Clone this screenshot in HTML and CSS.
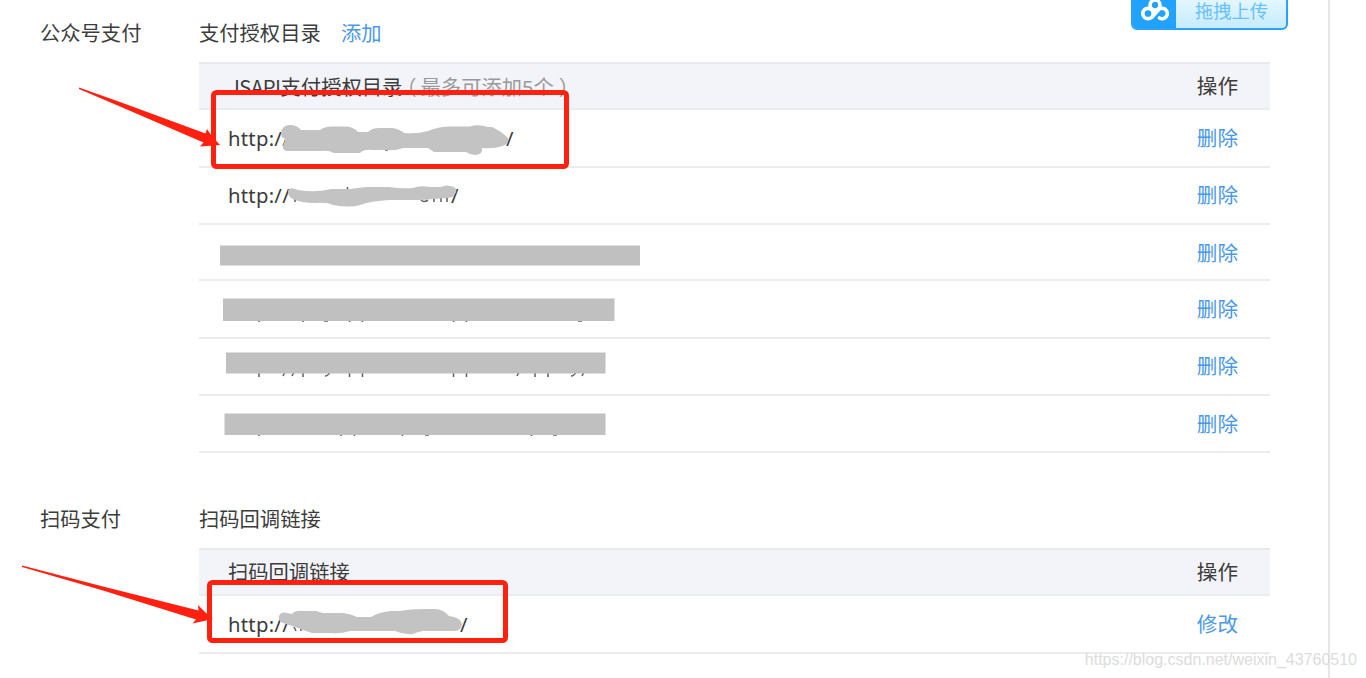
FILE: index.html
```
<!DOCTYPE html>
<html lang="zh-CN">
<head>
    <meta charset="UTF-8">
    <meta name="viewport" content="width=device-width, initial-scale=1.0">
    <title>支付授权目录</title>
    <link rel="stylesheet" href="styles.css">
</head>
<body>
    <div class="page">
        <div class="section">
            <div class="label">公众号支付</div>
            <div class="content">
                <div class="title">支付授权目录 <a class="add">添加</a></div>
                <div class="table">
                    <div class="row head">
                        <div><span class="jsapi">JSAPI</span>支付授权目录<span class="tip"><span class="paren">（</span>最多可添加5个<span class="paren-end">）</span></span></div>
                        <div class="action">操作</div>
                    </div>
                    <div class="row"><div class="url">http://<span class="end-1">/</span></div><a class="action">删除</a></div>
                    <div class="row short"><div class="url">http://<span class="end-2">/</span></div><a class="action">删除</a></div>
                    <div class="row low"><div class="url"></div><a class="action">删除</a></div>
                    <div class="row"><div class="url"></div><a class="action">删除</a></div>
                    <div class="row short"><div class="url"></div><a class="action">删除</a></div>
                    <div class="row last"><div class="url"></div><a class="action">删除</a></div>
                </div>
            </div>
        </div>
        <div class="section second">
            <div class="label">扫码支付</div>
            <div class="content">
                <div class="title">扫码回调链接</div>
                <div class="table">
                    <div class="row head">
                        <div>扫码回调链接</div>
                        <div class="action">操作</div>
                    </div>
                    <div class="row"><div class="url">http://<span class="end-3">/</span></div><a class="action">修改</a></div>
                </div>
            </div>
        </div>
    </div>

    <div class="upload">
        <div class="upload-icon">
            <svg width="32" height="24" viewBox="0 0 32 24" fill="none" stroke="#fff" stroke-width="3.7" stroke-linecap="round">
                <circle cx="16" cy="5" r="5"/>
                <circle cx="9" cy="13.500" r="5.200"/>
                <path d="M13 17L19 10.300A5.200 5.200 0 1 1 20.500 18"/>
            </svg>
        </div>
        <div class="upload-text">拖拽上传</div>
    </div>

    <!-- hidden addresses, boxes and arrows -->
    <svg class="marks" width="1366" height="678" viewBox="0 0 1366 678">
        <g class="ink">
            <path d="M259 319v3M303 319v3M324 321h4M349.500 319v3M362.500 319v3M453.500 319v3M466.500 319v3M578 321h4"/>
            <path d="M259 372v5M285 372l-2 4M294 372l-2 4M303 372v5M330 372q-2 4-5 4M349.500 372v5M362.500 372v5M453.500 372v5M466.500 372v5M519 372l-2 4M535 372v5M548 372v5M576 372q-2 4-5 4M584 372l-2 4"/>
            <path d="M259 433v3M341 433v3M354.500 433v3M402.500 433v3M425 435h4M531.500 433v3M553 435h4"/>
            <path d="M347.500 187v4M371 188v3M383 188v3M421 200q3 3 7 0M434 196v6M441 196v6M447 196v6M295 199v3"/>
            <path d="M385 150h3M433 150h2M294 627l2 4M301 629v2M369 629v2M374 629v2"/>
        </g>
        <g class="cover">
            <rect x="220" y="245.500" width="420" height="20"/>
            <rect x="223" y="298.500" width="391.500" height="22.500"/>
            <rect x="226" y="352.500" width="379.500" height="21"/>
            <rect x="224.500" y="413.500" width="381" height="21.500"/>
        </g>
        <g class="brush">
            <path d="M281 133Q282 125 290 125Q297 125 301 130H320Q325 126 333 126.500H348Q355 128 358 132H368Q372 128 379 128H393Q401 130 404 133Q418 134 428 131Q437 127 448 126.500H470Q478 124 488 127H492Q501 131 508 138Q509 142 505 145Q495 149 482 148Q483 155 475 155Q470 155 466 152H434L428 148H403L396 150H372Q364 149 360 153H334Q328 150 322 151H286Q281 149 284 143Q286 140 284 138Q281 138 281 133Z"/>
            <path d="M288 191Q289 186 298 190Q315 193 331 189H350L366 187H389Q402 189 413 188Q420 185 430 187H441Q446 184 454 187Q458 190 455 194Q453 198 447 198Q434 199 421 200H390Q370 201 360 205Q350 208 333 205Q327 202 315 203Q301 203 293 199Q288 197 288 191Z"/>
            <path d="M279 616Q281 611 287 613L292 614Q295 610 303 611H316L323 613H343Q351 614 357 617H371Q379 612 391 611H400Q409 609 425 609H436Q444 610 449 616Q460 617 462 624Q461 631 455 631H423Q417 632 413 634Q404 635 395 631H350Q341 634 330 633H312Q302 630 298 628L286 624Q277 622 279 616Z"/>
        </g>
        <g class="box">
            <rect x="213.500" y="92.500" width="353" height="74" rx="3"/>
            <rect x="209.500" y="582.500" width="296" height="58" rx="3"/>
        </g>
        <g class="arrow">
            <path d="M79 87.500L120 102L205.500 133.500L207 129L211 135L220 145L200 146.500L203.500 142.500L120 106.500L79 89Z"/>
            <path d="M22 565.500L103 586.500L198.500 610.500L198 605L205 612L213 619L192.500 623.500L196 619.500L103 590.500L22 567Z"/>
        </g>
    </svg>
    <div class="watermark">https://blog.csdn.net/weixin_43760510</div>
</body>
</html>
```
FILE: styles.css
```
body {
    margin: 0;
    height: 678px;
    overflow: hidden;
    position: relative;
    background-color: #fff;
    color: #3c3c3c;
    font-family: "Noto Sans", "Noto Sans CJK SC", sans-serif;
    font-size: 20.3px;
    line-height: 30px;
}

a {
    color: #4a98ec;
}

.page {
    box-sizing: border-box;
    width: 1330px;
    height: 678px;
    padding: 18px 58px 0 40px;
    border-right: 2px solid #e6e6e6;
}

.section {
    display: flex;
}

.second {
    margin-top: 51px;
}

.label {
    width: 159px;
}

.content {
    flex: 1;
}

.add {
    margin-left: 15px;
}

.table {
    margin-top: 14px;
    border-top: 2px solid #e8e9ec;
}

.row {
    box-sizing: border-box;
    height: 58px;
    display: flex;
    align-items: center;
    justify-content: space-between;
    padding: 0 32px 0 29px;
    border-bottom: 2px solid #ebecee;
}

.head {
    height: 46px;
    background-color: #f3f4f9;
}

.short {
    height: 57px;
    padding-bottom: 2px;
}

.low {
    height: 56px;
    padding-top: 1px;
}

.last {
    height: 57px;
}

.jsapi {
    font-family: "Noto Sans CJK SC", sans-serif;
    margin-left: 1px;
    letter-spacing: -0.5px;
}

.tip {
    color: #999;
}

.paren {
    margin-left: -6px;
    margin-right: 4px;
}

.paren-end {
    margin-left: 5px;
}

.action {
    font-size: 20.6px;
}

.url {
    display: flex;
    letter-spacing: 0.25px;
}

.end-1 {
    margin-left: 216px;
}

.end-2 {
    margin-left: 161px;
}

.end-3 {
    margin-left: 170px;
}

.upload {
    position: absolute;
    top: -12px;
    left: 1131px;
    box-sizing: border-box;
    width: 157px;
    height: 42px;
    display: flex;
    border: 2px solid #2aa2fa;
    border-radius: 6px;
    overflow: hidden;
    background: linear-gradient(#eefaff, #c5ecff);
}

.upload-icon {
    width: 43px;
    padding-top: 10px;
    text-align: center;
    line-height: 0;
    background-color: #22a2ff;
    flex-shrink: 0;
}

.upload-text {
    margin-left: 19px;
    padding-top: 11px;
    font-size: 18.3px;
    line-height: 19px;
    font-family: "Noto Sans CJK SC", sans-serif;
    color: #67c0ff;
}

.marks {
    position: absolute;
    top: 0;
    left: 0;
}

.ink {
    fill: none;
    stroke: #666;
    stroke-width: 1.6;
}

.cover {
    fill: #c0c0c0;
}

.brush {
    fill: #c3c3c3;
}

.box {
    fill: none;
    stroke: #ff2010;
    stroke-width: 5;
}

.arrow {
    fill: #ff2010;
}

.watermark {
    position: absolute;
    right: 9px;
    bottom: 8px;
    font-family: "Liberation Sans", Arial, sans-serif;
    font-size: 16px;
    line-height: 20px;
    color: #dcdcdc;
}
```
